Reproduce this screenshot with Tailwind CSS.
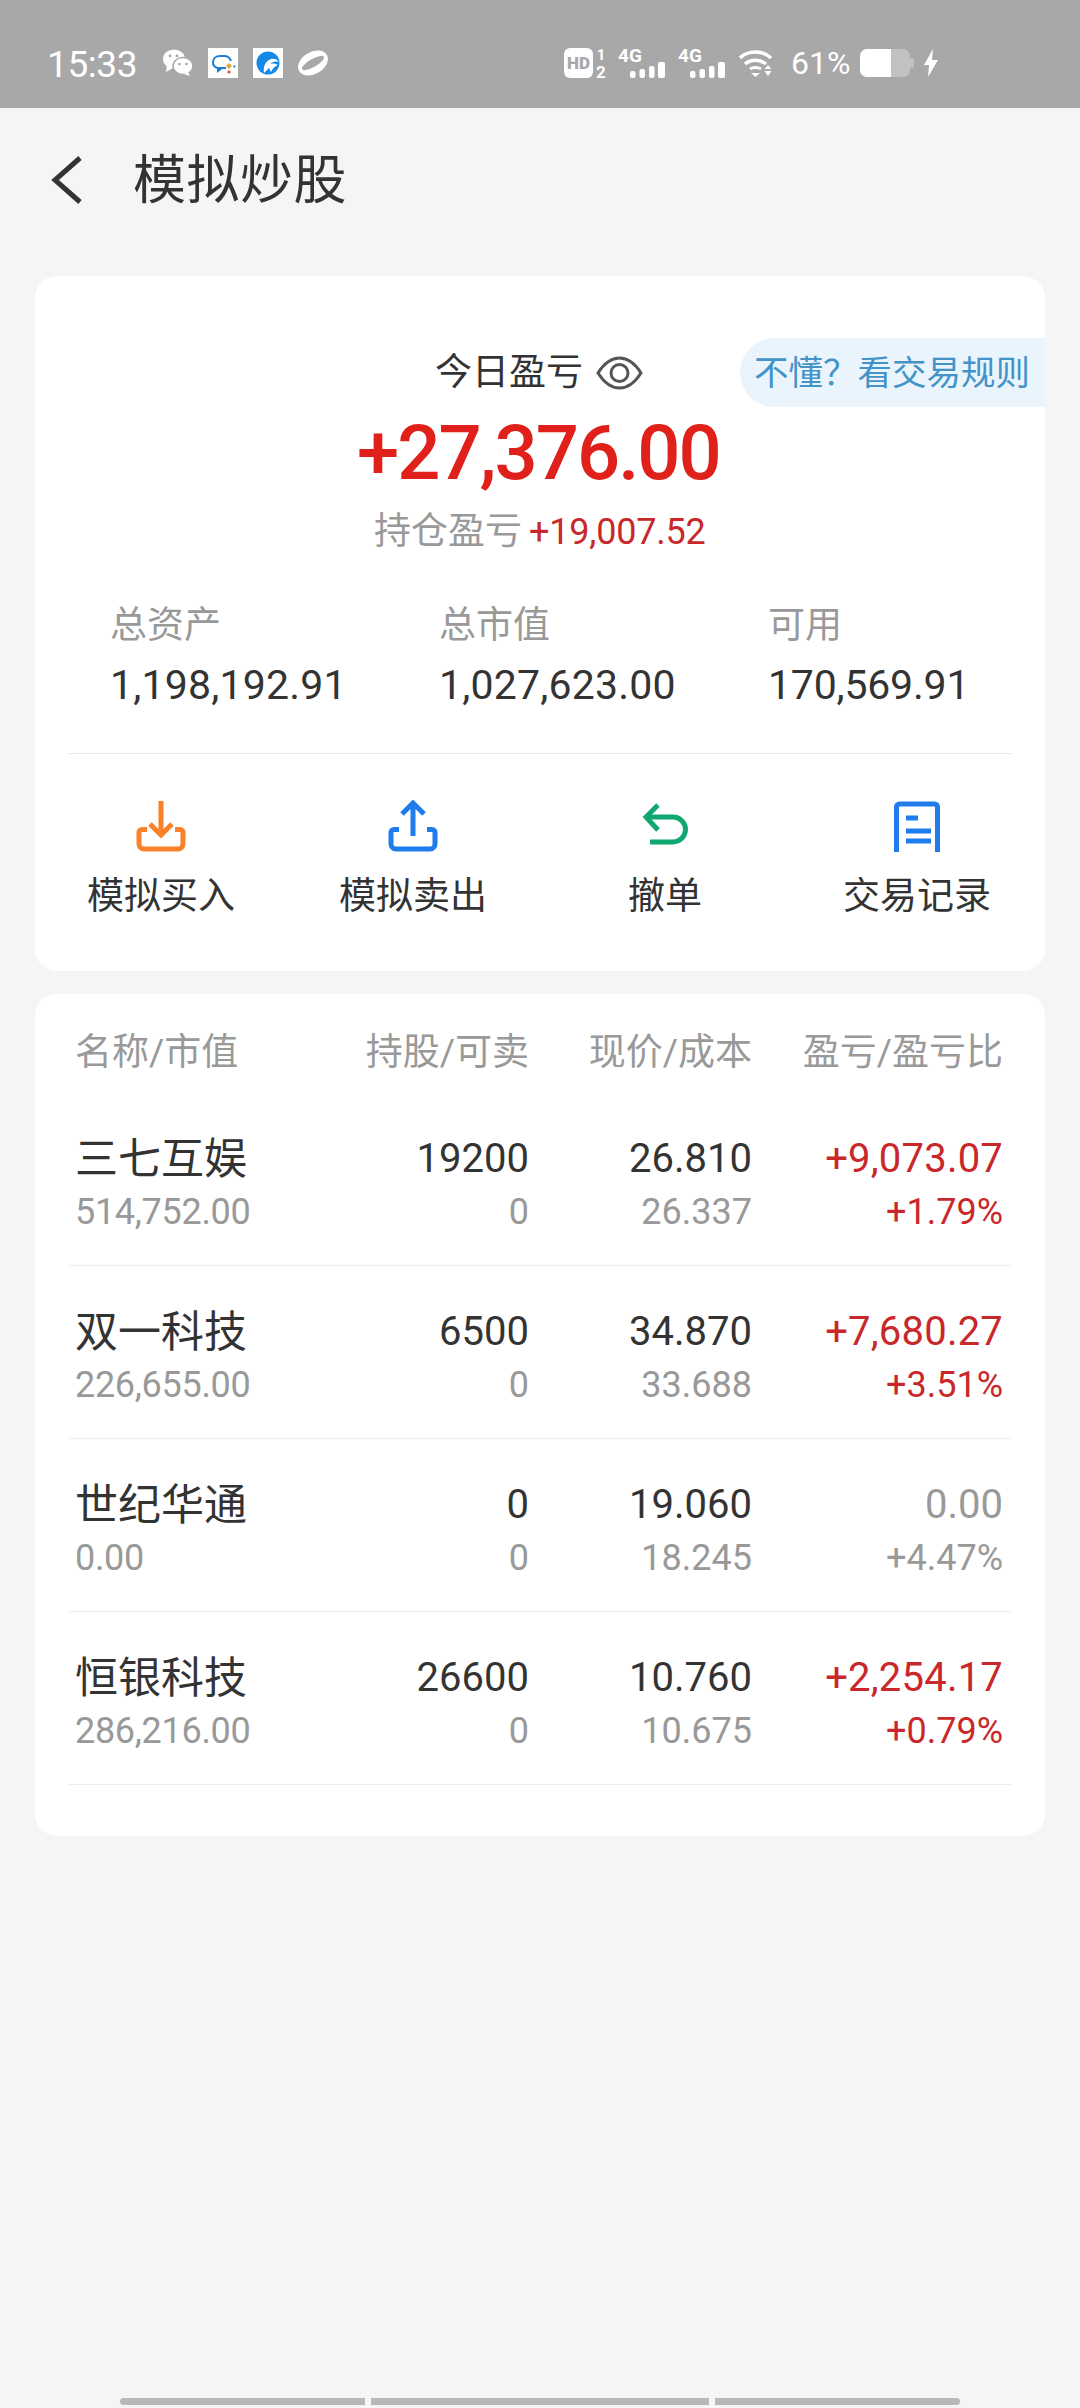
<!DOCTYPE html>
<html lang="zh-CN">
<head>
  <meta charset="UTF-8" />
  <meta name="viewport" content="width=device-width, initial-scale=1.0"/>
  <title>模拟炒股</title>
  <script src="https://cdn.jsdelivr.net/npm/@tailwindcss/browser@4"></script>
</head>
<body class="bg-[#f5f5f5] text-[#333] font-['Roboto','Noto_Sans_CJK_SC',sans-serif] w-[1080px] h-[2408px] flex flex-col overflow-hidden">

  <!-- status bar -->
  <div class="h-[108px] shrink-0 bg-[#a8a8a8] flex items-center pl-[47px] pt-[18px] text-white">
    <span class="text-[37px] leading-none tracking-[-0.4px] mt-[3px] w-[115px]">15:33</span>
    <svg class="w-[32px] h-[30px] mr-[14px]" viewBox="0 0 32 30" fill="#fff">
      <ellipse cx="12" cy="11" rx="11" ry="9.5"/><path d="M5 17l-1 7 7-4z"/>
      <ellipse cx="21" cy="18" rx="10" ry="8.5" stroke="#a8a8a8" stroke-width="1.5"/><path d="M26 24l2 4-6-2z"/>
      <circle cx="8" cy="8" r="1.4" fill="#a8a8a8"/><circle cx="15" cy="8" r="1.4" fill="#a8a8a8"/>
      <circle cx="17.5" cy="16" r="1.3" fill="#a8a8a8"/><circle cx="24.5" cy="16" r="1.3" fill="#a8a8a8"/>
    </svg>
    <svg class="w-[30px] h-[30px] mr-[15px]" viewBox="0 0 30 30">
      <rect width="30" height="30" fill="#fff"/>
      <path d="M18 20H10a5.500 5.500 0 0 1-5-6c0-3.500 3-6 7-6h4c3.500 0 6 2 7 5" fill="none" stroke="#1a7fd4" stroke-width="2"/>
      <path d="M10 20v3l4-3" fill="none" stroke="#1a7fd4" stroke-width="2"/>
      <path d="M21 15l3 3-3 3-3-3z" fill="#e8a33c"/><path d="M26 17l2 1.500-2 1.500-1-1.500z" fill="#3a8fd6"/><path d="M21 22l2 2-2 2-2-2z" fill="#d9603a"/>
    </svg>
    <svg class="w-[30px] h-[30px] mr-[15px]" viewBox="0 0 30 30">
      <rect width="30" height="30" fill="#fff"/>
      <circle cx="15" cy="15" r="11.500" fill="#1589e8"/>
      <path d="M11 25c-1-6 1-12 7-14 3-1 6 0 8 3-4-1-7 0-9 2 3-1 6 0 8 1-3 1-5 3-7 7l-2-4z" fill="#fff"/>
    </svg>
    <svg class="w-[30px] h-[30px]" viewBox="0 0 30 30">
      <g transform="rotate(-30 15 15)">
        <ellipse cx="15" cy="15" rx="16" ry="11" fill="#fff"/>
        <ellipse cx="15" cy="15" rx="12.500" ry="4" fill="#a8a8a8"/>
      </g>
    </svg>

    <!-- right side icons -->
    <div class="ml-auto mr-[142px] flex items-center">
      <svg class="w-[44px] h-[30px] mr-[10px] overflow-visible" viewBox="0 0 44 30">
        <rect width="29" height="30" rx="6" fill="#fff"/>
        <text x="14.500" y="21" text-anchor="middle" font-size="17" font-weight="900" fill="#a8a8a8" font-family="Roboto">HD</text>
        <text x="37" y="12" text-anchor="middle" font-size="15" font-weight="700" fill="#fff" font-family="Roboto">1</text>
        <text x="37" y="30" text-anchor="middle" font-size="17" font-weight="700" fill="#fff" font-family="Roboto">2</text>
      </svg>
      <svg class="w-[47px] h-[30px] mr-[13px] overflow-visible" viewBox="0 0 47 30" fill="#fff">
        <text x="0" y="14" font-size="19" font-weight="700" font-family="Roboto">4G</text>
        <rect x="12" y="23" width="5.500" height="7" rx="2"/><rect x="21.500" y="21" width="5.500" height="9" rx="2"/><rect x="31" y="18" width="5.500" height="12" rx="2"/><rect x="40" y="14" width="7" height="16" rx="2"/>
      </svg>
      <svg class="w-[47px] h-[30px] mr-[13px] overflow-visible" viewBox="0 0 47 30" fill="#fff">
        <text x="0" y="14" font-size="19" font-weight="700" font-family="Roboto">4G</text>
        <rect x="12" y="23" width="5.500" height="7" rx="2"/><rect x="21.500" y="21" width="5.500" height="9" rx="2"/><rect x="31" y="18" width="5.500" height="12" rx="2"/><rect x="40" y="14" width="7" height="16" rx="2"/>
      </svg>
      <svg class="w-[37px] h-[28px] mr-[16px]" viewBox="0 0 37 28" fill="none" stroke="#fff" stroke-width="3.500">
        <path d="M2 9C10 1 25 1 33 9"/><path d="M7 15c6-5 15-5 21 0"/><path d="M12 20c3-2 8-2 11 0" stroke-width="3"/>
        <path d="M13 24h9l-4.500 4z" fill="#fff" stroke="none"/>
        <path d="M30 16l3.500 4h-7zM26.500 22h7L30 27z" fill="#fff" stroke="none"/>
      </svg>
      <span class="text-[32px] leading-none w-[69px]">61%</span>
      <svg class="w-[54px] h-[28px] mr-[10px]" viewBox="0 0 54 28">
        <rect x="0" y="0" width="50" height="28" rx="7" fill="#fff" fill-opacity="0.3"/>
        <path d="M7 0H31V28H7a7 7 0 0 1-7-7V7a7 7 0 0 1 7-7z" fill="#fff"/>
        <rect x="50" y="9" width="4" height="10" rx="2" fill="#fff" fill-opacity="0.3"/>
      </svg>
      <svg class="w-[14px] h-[28px]" viewBox="0 0 14 28" fill="#fff"><path d="M9 0L0 16h5L4 28l10-17H8z"/></svg>
    </div>
  </div>

  <!-- title -->
  <div class="h-[168px] shrink-0 flex items-center pb-[24px]">
    <svg class="ml-[50px] w-[32px] h-[48px]" viewBox="0 0 32 48" fill="none" stroke="#333" stroke-width="5"><path d="M30 2L5 24l25 22"/></svg>
    <h1 class="ml-[51px] text-[53px] font-normal leading-none tracking-[0.5px] pt-[2px]">模拟炒股</h1>
  </div>

  <!-- summary card -->
  <section class="relative mx-[35px] bg-white rounded-[22px] pt-[72px] pb-[49px]">
    <div class="absolute right-0 top-[62px] h-[69px] w-[305px] pl-[14px] pt-[3px] bg-[#eaf4fc] rounded-l-[35px] flex items-center text-[#4393c9] text-[34.5px] whitespace-nowrap">不懂？看交易规则</div>

    <div class="h-[50px] flex items-center pl-[400px] text-[37px]">
      <span>今日盈亏</span>
      <svg class="ml-[13px] w-[47px] h-[34px]" viewBox="0 0 47 34" fill="none" stroke="#555" stroke-width="3">
        <path d="M2 17C9 6 16 2 23.500 2S38 6 45 17c-7 11-14 15-21.500 15S9 28 2 17z"/>
        <circle cx="23.500" cy="17" r="8.500"/>
      </svg>
    </div>
    <p class="h-[80px] mt-[15px] pl-[322px] leading-[80px] text-[76px] tracking-[-2px] font-medium text-[#e0201a] whitespace-nowrap">+27,376.00</p>
    <div class="h-[50px] mt-[14px] pl-[339px] flex items-center whitespace-nowrap">
      <span class="text-[37px] text-[#999]">持仓盈亏</span>
      <span class="ml-[7px] text-[36px] tracking-[-0.2px] text-[#c9282a]">+19,007.52</span>
    </div>

    <div class="mt-[44px] grid grid-cols-[329px_329px_1fr] pl-[75px]">
      <div>
        <p class="h-[50px] leading-[50px] text-[37px] text-[#999]">总资产</p>
        <p class="h-[50px] mt-[9px] leading-[50px] text-[41px] tracking-[0.2px]">1,198,192.91</p>
      </div>
      <div>
        <p class="h-[50px] leading-[50px] text-[37px] text-[#999]">总市值</p>
        <p class="h-[50px] mt-[9px] leading-[50px] text-[41px] tracking-[0.2px]">1,027,623.00</p>
      </div>
      <div>
        <p class="h-[50px] leading-[50px] text-[37px] text-[#999]">可用</p>
        <p class="h-[50px] mt-[9px] leading-[50px] text-[41px] tracking-[-0.2px]">170,569.91</p>
      </div>
    </div>

    <div class="mt-[43px] mx-[33px] border-t border-[#e6e6e6]"></div>

    <div class="mt-[46px] grid grid-cols-[252px_252px_252px_252px]">
      <div class="flex flex-col items-center">
        <svg class="w-[52px] h-[52px]" viewBox="0 0 52 52" fill="none" stroke="#f98129" stroke-width="5">
          <path d="M26 1V35M15 24l11 11 11-11"/>
          <path d="M12 29.500H7a3 3 0 0 0-3 3V44a5 5 0 0 0 5 5H43a5 5 0 0 0 5-5V32.500a3 3 0 0 0-3-3H40"/>
        </svg>
        <span class="h-[50px] mt-[20px] leading-[50px] text-[37px]">模拟买入</span>
      </div>
      <div class="flex flex-col items-center">
        <svg class="w-[52px] h-[52px]" viewBox="0 0 52 52" fill="none" stroke="#1f7cec" stroke-width="5">
          <path d="M26 36V3M15 14L26 3l11 11"/>
          <path d="M12 29.500H7a3 3 0 0 0-3 3V44a5 5 0 0 0 5 5H43a5 5 0 0 0 5-5V32.500a3 3 0 0 0-3-3H40"/>
        </svg>
        <span class="h-[50px] mt-[20px] leading-[50px] text-[37px]">模拟卖出</span>
      </div>
      <div class="flex flex-col items-center">
        <svg class="w-[52px] h-[52px]" viewBox="0 0 52 52" fill="none" stroke="#10a870" stroke-width="5">
          <path d="M19 5L7 17l12 13"/>
          <path d="M7 17H34a11.500 11.500 0 0 1 0 25H11"/>
        </svg>
        <span class="h-[50px] mt-[20px] leading-[50px] text-[37px]">撤单</span>
      </div>
      <div class="flex flex-col items-center">
        <svg class="w-[52px] h-[52px]" viewBox="0 0 52 52" fill="none" stroke="#1f7cec" stroke-width="5">
          <path d="M5.500 52V7a3 3 0 0 1 3-3H43.500a3 3 0 0 1 3 3V52"/>
          <path d="M15 18H27M15 31H40M15 41H40"/>
        </svg>
        <span class="h-[50px] mt-[20px] leading-[50px] text-[37px]">交易记录</span>
      </div>
    </div>
  </section>

  <!-- holdings card -->
  <section class="mx-[35px] mt-[23px] bg-white rounded-[22px] px-[33px] pb-[51px]">
    <div class="grid grid-cols-[200px_254px_223px_251px] pl-[7px] pt-[34px] h-[138px] text-[37px] leading-[50px] text-[#999] whitespace-nowrap">
      <span>名称/市值</span>
      <span class="text-right">持股/可卖</span>
      <span class="text-right">现价/成本</span>
      <span class="text-right">盈亏/盈亏比</span>
    </div>

    <div class="grid grid-cols-[200px_254px_223px_251px] pl-[7px] h-[134px] border-b border-[#eeeeee] whitespace-nowrap text-right">
      <div class="text-left"><p class="h-[55px] leading-[54px] text-[43px]">三七互娱</p><p class="h-[50px] leading-[50px] text-[36px] tracking-[-0.3px] text-[#999]">514,752.00</p></div>
      <div><p class="h-[55px] leading-[54px] text-[40px]">19200</p><p class="h-[50px] leading-[50px] text-[36px] text-[#999]">0</p></div>
      <div><p class="h-[55px] leading-[54px] text-[40px]">26.810</p><p class="h-[50px] leading-[50px] text-[36px] text-[#999]">26.337</p></div>
      <div class="text-[#c9282a]"><p class="h-[55px] leading-[54px] text-[40px] tracking-[0.2px]">+9,073.07</p><p class="h-[50px] leading-[50px] text-[36px]">+1.79%</p></div>
    </div>

    <div class="grid grid-cols-[200px_254px_223px_251px] pl-[7px] pt-[39px] h-[173px] border-b border-[#eeeeee] whitespace-nowrap text-right">
      <div class="text-left"><p class="h-[55px] leading-[54px] text-[43px]">双一科技</p><p class="h-[50px] leading-[50px] text-[36px] tracking-[-0.3px] text-[#999]">226,655.00</p></div>
      <div><p class="h-[55px] leading-[54px] text-[40px]">6500</p><p class="h-[50px] leading-[50px] text-[36px] text-[#999]">0</p></div>
      <div><p class="h-[55px] leading-[54px] text-[40px]">34.870</p><p class="h-[50px] leading-[50px] text-[36px] text-[#999]">33.688</p></div>
      <div class="text-[#c9282a]"><p class="h-[55px] leading-[54px] text-[40px] tracking-[0.2px]">+7,680.27</p><p class="h-[50px] leading-[50px] text-[36px]">+3.51%</p></div>
    </div>

    <div class="grid grid-cols-[200px_254px_223px_251px] pl-[7px] pt-[39px] h-[173px] border-b border-[#eeeeee] whitespace-nowrap text-right">
      <div class="text-left"><p class="h-[55px] leading-[54px] text-[43px]">世纪华通</p><p class="h-[50px] leading-[50px] text-[36px] tracking-[-0.3px] text-[#999]">0.00</p></div>
      <div><p class="h-[55px] leading-[54px] text-[40px]">0</p><p class="h-[50px] leading-[50px] text-[36px] text-[#999]">0</p></div>
      <div><p class="h-[55px] leading-[54px] text-[40px]">19.060</p><p class="h-[50px] leading-[50px] text-[36px] text-[#999]">18.245</p></div>
      <div class="text-[#999]"><p class="h-[55px] leading-[54px] text-[40px]">0.00</p><p class="h-[50px] leading-[50px] text-[36px]">+4.47%</p></div>
    </div>

    <div class="grid grid-cols-[200px_254px_223px_251px] pl-[7px] pt-[39px] h-[173px] border-b border-[#eeeeee] whitespace-nowrap text-right">
      <div class="text-left"><p class="h-[55px] leading-[54px] text-[43px]">恒银科技</p><p class="h-[50px] leading-[50px] text-[36px] tracking-[-0.3px] text-[#999]">286,216.00</p></div>
      <div><p class="h-[55px] leading-[54px] text-[40px]">26600</p><p class="h-[50px] leading-[50px] text-[36px] text-[#999]">0</p></div>
      <div><p class="h-[55px] leading-[54px] text-[40px]">10.760</p><p class="h-[50px] leading-[50px] text-[36px] text-[#999]">10.675</p></div>
      <div class="text-[#c9282a]"><p class="h-[55px] leading-[54px] text-[40px] tracking-[0.2px]">+2,254.17</p><p class="h-[50px] leading-[50px] text-[36px]">+0.79%</p></div>
    </div>
  </section>

  <!-- gesture bar -->
  <div class="mt-auto mb-[3px] ml-[120px] flex gap-[6px] h-[7px]">
    <div class="w-[245px] bg-[#b8b8b8] rounded-l-full"></div>
    <div class="w-[338px] bg-[#b8b8b8]"></div>
    <div class="w-[245px] bg-[#b8b8b8] rounded-r-full"></div>
  </div>
</body>
</html>
